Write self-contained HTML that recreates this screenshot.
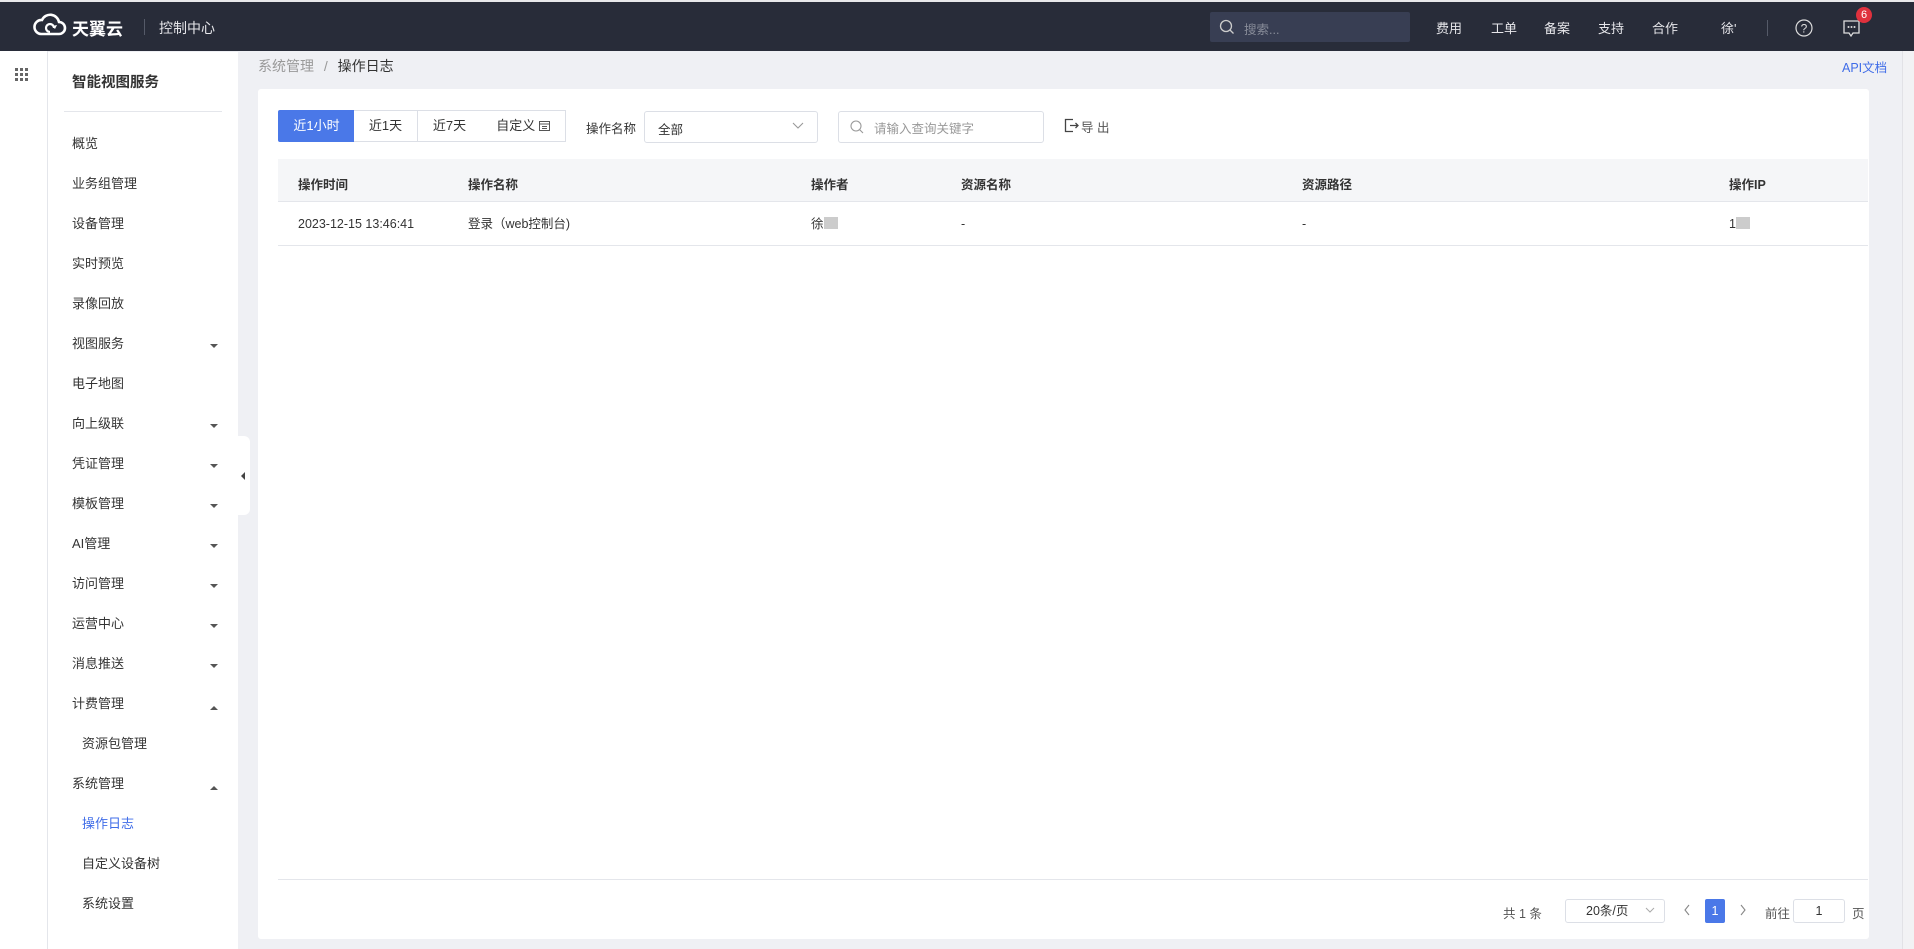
<!DOCTYPE html>
<html><head><meta charset="utf-8"><style>
*{box-sizing:border-box;margin:0;padding:0}
body{width:1914px;height:949px;overflow:hidden;background:#eff0f4;font-family:"Liberation Sans","Noto Sans CJK SC",sans-serif;font-size:13px;color:#333;position:relative}
.abs{position:absolute}
.hdr{left:0;top:0;width:1914px;height:51px;background:#282c39;border-top:2px solid #e8e8ea}
.hdr .t{color:#e6e6ea;font-size:13px;top:16px}
.strip{left:0;top:51px;width:48px;height:898px;background:#fff;border-right:1px solid #e4e6eb}
.side{left:48px;top:52px;width:190px;height:897px;background:#fff}
.si{position:absolute;left:24px;font-size:13px;color:#333;line-height:16px}
.arr{position:absolute;left:162px;width:0;height:0;border-left:4px solid transparent;border-right:4px solid transparent}
.dn{border-top:4px solid #555}.up{border-bottom:4px solid #555}
.card{left:258px;top:89px;width:1611px;height:850px;background:#fff;border-radius:3px}
.btn{position:absolute;top:110px;height:32px;border:1px solid #dcdfe6;line-height:30px;text-align:center;font-size:13px;color:#333;background:#fff}
.th{position:absolute;top:174px;font-size:12.5px;color:#333;font-weight:600}
.td{position:absolute;top:216px;font-size:12.5px;color:#333;line-height:16px}
</style></head><body>
<div class="abs hdr">
 <svg class="abs" style="left:32px;top:10px" width="36" height="26" viewBox="0 0 36 26"><path d="M9 22 H27 A6 6 0 0 0 27 10 A9 9 0 0 0 10 8 A7 7 0 0 0 9 22 Z" fill="none" stroke="#fff" stroke-width="2.6"/><path d="M18 20 A4 4 0 1 1 22 16" fill="none" stroke="#fff" stroke-width="2.2"/><path d="M20 14 L23 17 L25 13Z" fill="#fff"/></svg>
 <div class="abs" style="left:72px;top:13px;color:#fff;font-size:17px;font-weight:bold">天翼云</div>
 <div class="abs" style="left:144px;top:17px;width:1px;height:16px;background:#555a68"></div>
 <div class="abs t" style="left:159px;top:16px;font-size:14px">控制中心</div>
 <div class="abs" style="left:1210px;top:10px;width:200px;height:30px;background:#383e53;border-radius:2px"></div>
 <svg class="abs" style="left:1219px;top:17px" width="16" height="16"><circle cx="7" cy="7" r="5.5" fill="none" stroke="#ccc" stroke-width="1.3"/><path d="M11 11 L14.5 14.5" stroke="#ccc" stroke-width="1.3"/></svg>
 <div class="abs" style="left:1244px;top:17px;color:#888c99;font-size:12.5px">搜索...</div>
 <div class="abs t" style="left:1436px">费用</div>
 <div class="abs t" style="left:1491px">工单</div>
 <div class="abs t" style="left:1544px">备案</div>
 <div class="abs t" style="left:1598px">支持</div>
 <div class="abs t" style="left:1652px">合作</div>
 <div class="abs t" style="left:1721px">徐'</div>
 <div class="abs" style="left:1767px;top:18px;width:1px;height:16px;background:#555a68"></div>
 <svg class="abs" style="left:1795px;top:17px" width="18" height="18"><circle cx="9" cy="9" r="8" fill="none" stroke="#ddd" stroke-width="1.2"/><text x="9" y="13.5" text-anchor="middle" font-size="12" fill="#ddd" font-family="Liberation Sans">?</text></svg>
 <svg class="abs" style="left:1842px;top:17px" width="20" height="20"><path d="M2 2 H17 V14 H11 L9 17 L7 14 H2 Z" fill="none" stroke="#ddd" stroke-width="1.3"/><circle cx="6.5" cy="8" r="1" fill="#ddd"/><circle cx="9.5" cy="8" r="1" fill="#ddd"/><circle cx="12.5" cy="8" r="1" fill="#ddd"/></svg>
 <div class="abs" style="left:1856px;top:5px;width:16px;height:16px;border-radius:8px;background:#e0313d;color:#fff;font-size:11px;text-align:center;line-height:16px">6</div>
</div>
<div class="abs strip">
 <svg class="abs" style="left:15px;top:17px" width="13" height="13"><g fill="#666"><rect x="0" y="0" width="3" height="3"/><rect x="5" y="0" width="3" height="3"/><rect x="10" y="0" width="3" height="3"/><rect x="0" y="5" width="3" height="3"/><rect x="5" y="5" width="3" height="3"/><rect x="10" y="5" width="3" height="3"/><rect x="0" y="10" width="3" height="3"/><rect x="5" y="10" width="3" height="3"/><rect x="10" y="10" width="3" height="3"/></g></svg>
</div>
<div class="abs side">
 <div class="si" style="top:23px;font-size:14.5px;font-weight:600">智能视图服务</div>
 <div class="abs" style="left:16px;top:59px;width:158px;height:1px;background:#e4e6eb"></div>
 <div class="si" style="top:84px">概览</div>
 <div class="si" style="top:124px">业务组管理</div>
 <div class="si" style="top:164px">设备管理</div>
 <div class="si" style="top:204px">实时预览</div>
 <div class="si" style="top:244px">录像回放</div>
 <div class="si" style="top:284px">视图服务</div><div class="arr dn" style="top:292px"></div>
 <div class="si" style="top:324px">电子地图</div>
 <div class="si" style="top:364px">向上级联</div><div class="arr dn" style="top:372px"></div>
 <div class="si" style="top:404px">凭证管理</div><div class="arr dn" style="top:412px"></div>
 <div class="si" style="top:444px">模板管理</div><div class="arr dn" style="top:452px"></div>
 <div class="si" style="top:484px">AI管理</div><div class="arr dn" style="top:492px"></div>
 <div class="si" style="top:524px">访问管理</div><div class="arr dn" style="top:532px"></div>
 <div class="si" style="top:564px">运营中心</div><div class="arr dn" style="top:572px"></div>
 <div class="si" style="top:604px">消息推送</div><div class="arr dn" style="top:612px"></div>
 <div class="si" style="top:644px">计费管理</div><div class="arr up" style="top:654px"></div>
 <div class="si" style="top:684px;left:34px">资源包管理</div>
 <div class="si" style="top:724px">系统管理</div><div class="arr up" style="top:734px"></div>
 <div class="si" style="top:764px;left:34px;color:#3f6ce8">操作日志</div>
 <div class="si" style="top:804px;left:34px">自定义设备树</div>
 <div class="si" style="top:844px;left:34px">系统设置</div>
</div>
<div class="abs" style="left:238px;top:436px;width:12px;height:79px;background:#fff;border-radius:0 6px 6px 0"></div>
<div class="abs" style="left:241px;top:472px;width:0;height:0;border-top:4px solid transparent;border-bottom:4px solid transparent;border-right:4px solid #444"></div>
<div class="abs" style="left:258px;top:56px;font-size:14px;color:#999">系统管理 <span style="margin:0 6px">/</span> <span style="color:#333">操作日志</span></div>
<div class="abs" style="left:1842px;top:57px;font-size:12.5px;color:#3f6ce8">API文档</div>
<div class="abs" style="left:1902px;top:51px;width:12px;height:898px;background:#f2f2f4;border-left:1px solid #e2e2e6"></div>
<div class="abs card"></div>
<div class="btn" style="left:278px;width:77px;background:#4a78e8;border-color:#4a78e8;color:#fff;border-radius:2px 0 0 2px">近1小时</div>
<div class="btn" style="left:354px;width:64px;border-left:none">近1天</div>
<div class="btn" style="left:417px;width:65px">近7天</div>
<div class="btn" style="left:481px;width:85px;border-left:none">自定义 <svg width="11" height="11" style="vertical-align:-1px"><rect x="0.5" y="1.5" width="10" height="9" fill="none" stroke="#555"/><path d="M0.5 4 H10.5 M3 6.5H8M3 8.5H8" stroke="#555"/></svg></div>
<div class="abs" style="left:586px;top:118px;font-size:12.5px">操作名称</div>
<div class="abs" style="left:644px;top:111px;width:174px;height:32px;border:1px solid #dcdfe6;border-radius:3px"></div>
<div class="abs" style="left:658px;top:119px;font-size:12.5px">全部</div>
<svg class="abs" style="left:792px;top:122px" width="12" height="8"><path d="M1 1 L6 6 L11 1" fill="none" stroke="#999" stroke-width="1.1"/></svg>
<div class="abs" style="left:838px;top:111px;width:206px;height:32px;border:1px solid #dcdfe6;border-radius:3px"></div>
<svg class="abs" style="left:850px;top:120px" width="14" height="14"><circle cx="6" cy="6" r="5" fill="none" stroke="#999" stroke-width="1.1"/><path d="M9.5 9.5 L13 13" stroke="#999" stroke-width="1.1"/></svg>
<div class="abs" style="left:874px;top:118px;font-size:12.5px;color:#999">请输入查询关键字</div>
<svg class="abs" style="left:1064px;top:118px" width="15" height="15"><path d="M9 1.5 H1.5 V13.5 H9" fill="none" stroke="#444" stroke-width="1.3"/><path d="M6 7.5 H14 M11.5 5 L14 7.5 L11.5 10" fill="none" stroke="#444" stroke-width="1.3"/></svg>
<div class="abs" style="left:1081px;top:117px;font-size:12.5px;color:#555">导 出</div>
<div class="abs" style="left:278px;top:159px;width:1590px;height:43px;background:#f5f6f8;border-bottom:1px solid #e4e6eb"></div>
<div class="abs" style="left:278px;top:245px;width:1590px;height:1px;background:#e4e6eb"></div>
<div class="th" style="left:298px">操作时间</div>
<div class="th" style="left:468px">操作名称</div>
<div class="th" style="left:811px">操作者</div>
<div class="th" style="left:961px">资源名称</div>
<div class="th" style="left:1302px">资源路径</div>
<div class="th" style="left:1729px">操作IP</div>
<div class="td" style="left:298px">2023-12-15 13:46:41</div>
<div class="td" style="left:468px">登录（web控制台)</div>
<div class="td" style="left:811px">徐<span style="display:inline-block;width:14px;height:12px;background:#ccc;vertical-align:-1px"></span></div>
<div class="td" style="left:961px">-</div>
<div class="td" style="left:1302px">-</div>
<div class="td" style="left:1729px">1<span style="display:inline-block;width:14px;height:12px;background:#ccc;vertical-align:-1px"></span></div>
<div class="abs" style="left:278px;top:879px;width:1590px;height:1px;background:#e4e6eb"></div>
<div class="abs" style="left:1503px;top:903px;font-size:12.5px;color:#555">共 1 条</div>
<div class="abs" style="left:1565px;top:899px;width:100px;height:24px;border:1px solid #dcdfe6;border-radius:3px;font-size:12.5px;line-height:22px;padding-left:20px">20条/页</div>
<svg class="abs" style="left:1645px;top:907px" width="10" height="7"><path d="M1 1 L5 5 L9 1" fill="none" stroke="#aaa"/></svg>
<svg class="abs" style="left:1683px;top:904px" width="8" height="12"><path d="M6 1 L2 6 L6 11" fill="none" stroke="#888" stroke-width="1.1"/></svg>
<div class="abs" style="left:1705px;top:899px;width:20px;height:24px;background:#4a78e8;border-radius:2px;color:#fff;font-size:12.5px;text-align:center;line-height:24px">1</div>
<svg class="abs" style="left:1739px;top:904px" width="8" height="12"><path d="M2 1 L6 6 L2 11" fill="none" stroke="#888" stroke-width="1.1"/></svg>
<div class="abs" style="left:1765px;top:903px;font-size:12.5px;color:#555">前往</div>
<div class="abs" style="left:1793px;top:899px;width:52px;height:24px;border:1px solid #dcdfe6;border-radius:3px;text-align:center;line-height:22px;font-size:12.5px">1</div>
<div class="abs" style="left:1852px;top:903px;font-size:12.5px;color:#555">页</div>
</body></html>
